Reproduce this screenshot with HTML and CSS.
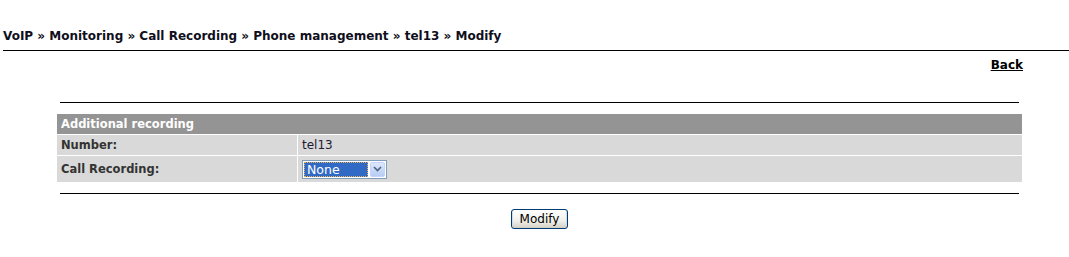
FILE: index.html
```html
<!DOCTYPE html>
<html>
<head>
<meta charset="utf-8">
<link rel="stylesheet" href="styles.css">
</head>
<body>
<div class="crumb">VoIP » Monitoring » Call Recording » Phone management » tel13 » Modify</div>
<div class="rule"></div>
<div class="backrow"><a class="back" href="#">Back</a></div>
<div class="section">
  <div class="line"></div>
  <div class="grid">
    <div class="head">Additional recording</div>
    <div class="label">Number:</div>
    <div class="value">tel13</div>
    <div class="label tall">Call Recording:</div>
    <div class="value tall">
      <span class="select"><span class="opt">None</span><span class="arrow"><svg width="9" height="6" viewBox="0 0 9 6"><path d="M1 1 L4.5 4.5 L8 1" fill="none" stroke="#4d6185" stroke-width="1.6"/></svg></span></span>
    </div>
  </div>
  <div class="line bottom"></div>
  <div class="actions"><button class="btn" type="button">Modify</button></div>
</div>
</body>
</html>
```
FILE: styles.css
```css
html, body { margin: 0; padding: 0; background: #fff; }
body { font-family: "DejaVu Sans", Verdana, sans-serif; color: #000; }
.crumb { padding: 28px 0 0 3px; font-size: 12px; font-weight: bold; line-height: 16px; height: 16px; color: #0f0f20; }
.rule { margin: 6px 0 0 3px; height: 1px; background: #000; }
.backrow { display: flex; justify-content: flex-end; padding: 6px 46px 0 0; height: 16px; }
.back { font-size: 12px; font-weight: bold; color: #000; text-decoration: underline; line-height: 16px; }
.section { margin: 0 47px 0 57px; padding-top: 29px; }
.line { height: 1px; background: #000; margin: 0 3px; }
.grid { margin-top: 11px; display: grid; grid-template-columns: 240px 1fr; gap: 1px; font-size: 11.5px; }
.head { grid-column: 1 / 3; background: #949494; color: #fff; font-weight: bold; height: 20px; line-height: 20px; padding-left: 4px; }
.label { background: #d9d9d9; color: #333; font-weight: bold; height: 20px; line-height: 20px; padding-left: 4px; }
.value { background: #d9d9d9; color: #221a33; font-size: 12px; height: 20px; line-height: 20px; padding-left: 4px; }
.tall { height: 26px; line-height: 26px; }
.value.tall { display: flex; align-items: center; }
.select { display: inline-flex; align-items: stretch; width: 83px; height: 17px; border: 1px solid #7f9db9; background: #fff; box-sizing: content-box; }
.opt { flex: 1; margin: 1px; background: #316ac5; color: #fff; font-size: 12.5px; line-height: 13px; padding-left: 2px; border: 1px dotted #e8b15a; }
.arrow { width: 15px; margin: 1px; background: linear-gradient(#dce8fb, #b8cdf3); border: 1px solid #c3d3fd; border-radius: 2px; display: flex; align-items: center; justify-content: center; box-sizing: border-box; }
.bottom { margin-top: 11px; }
.actions { display: flex; justify-content: center; padding-top: 15px; }
.btn { font-family: "DejaVu Sans", Verdana, sans-serif; font-size: 12px; color: #000; width: 57px; height: 20px; padding: 0; border: 1px solid #003c74; border-radius: 3px; background: linear-gradient(#ffffff, #f0f0ea 60%, #d6d0c5); box-shadow: inset 0 -1px 0 #d6d0c5, inset 1px 0 0 #cde, inset -1px 0 0 #cde; }
```
